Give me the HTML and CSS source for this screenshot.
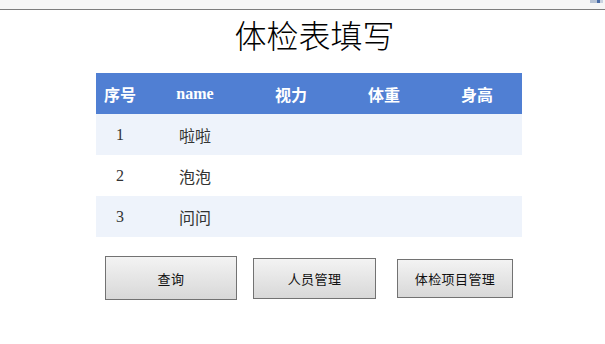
FILE: index.html
```html
<!DOCTYPE html>
<html lang="zh-CN">
<head>
<meta charset="utf-8">
<title>体检表填写</title>
<link rel="stylesheet" href="styles.css">
</head>
<body>
<div class="topbar"><span class="tb-icon"></span></div>
<div class="page">
  <h1 class="title">体检表填写</h1>
  <table class="grid">
    <colgroup>
      <col class="c1"><col class="c2"><col class="c3"><col class="c4"><col class="c5">
    </colgroup>
    <thead>
      <tr><th>序号</th><th>name</th><th>视力</th><th>体重</th><th>身高</th></tr>
    </thead>
    <tbody>
      <tr class="alt"><td>1</td><td>啦啦</td><td></td><td></td><td></td></tr>
      <tr><td>2</td><td>泡泡</td><td></td><td></td><td></td></tr>
      <tr class="alt"><td>3</td><td>问问</td><td></td><td></td><td></td></tr>
    </tbody>
  </table>
  <div class="actions">
    <button class="btn btn-query">查询</button>
    <button class="btn btn-staff">人员管理</button>
    <button class="btn btn-items">体检项目管理</button>
  </div>
</div>
</body>
</html>
```
FILE: styles.css
```css
html, body {
  margin: 0;
  padding: 0;
  background: #ffffff;
}

.topbar {
  height: 9px;
  background: #f6f6f6;
  border-bottom: 1px solid #7d7d7d;
  display: flex;
  justify-content: flex-end;
  align-items: flex-start;
}

.tb-icon {
  width: 13px;
  height: 3px;
  margin-right: 2px;
  background: linear-gradient(90deg, #b8c4d6 0%, #b8c4d6 55%, #4a6da8 55%, #4a6da8 80%, #c9d2e0 80%);
}

.page {
  width: 426px;
  margin-left: 96px;
}

.title {
  margin: 8px 0 0 0;
  padding-left: 11px;
  height: 32px;
  line-height: 32px;
  text-align: center;
  font-family: "Noto Sans CJK SC", sans-serif;
  font-weight: 300;
  font-size: 32px;
  color: #000;
}

.grid {
  margin-top: 23px;
  width: 426px;
  border-collapse: collapse;
  table-layout: fixed;
  font-family: "Liberation Serif", "Noto Sans CJK SC", serif;
  font-size: 16px;
}

.c1 { width: 48px; }
.c2 { width: 102px; }
.c3 { width: 90px; }
.c4 { width: 96px; }
.c5 { width: 90px; }

.grid th {
  height: 41px;
  padding: 0;
  background: #507fd3;
  color: #ffffff;
  font-weight: bold;
  text-align: center;
}

.grid td {
  height: 41px;
  padding: 0;
  text-align: center;
  color: #333333;
}

.grid tr.alt td {
  background: #eef3fb;
}

.actions {
  margin-top: 19px;
  padding-left: 9px;
  display: flex;
  align-items: center;
}

.btn {
  box-sizing: border-box;
  padding: 0;
  border: 1px solid #727272;
  background: linear-gradient(180deg, #f3f3f3 0%, #d8d8d8 100%);
  font-family: "Noto Sans CJK SC", sans-serif;
  font-size: 13px;
  letter-spacing: 0.4px;
  color: #111;
}

.btn-query {
  width: 132px;
  height: 44px;
}

.btn-staff {
  width: 123px;
  height: 41px;
  margin-left: 16px;
}

.btn-items {
  width: 116px;
  height: 39px;
  margin-left: 21px;
}
```
